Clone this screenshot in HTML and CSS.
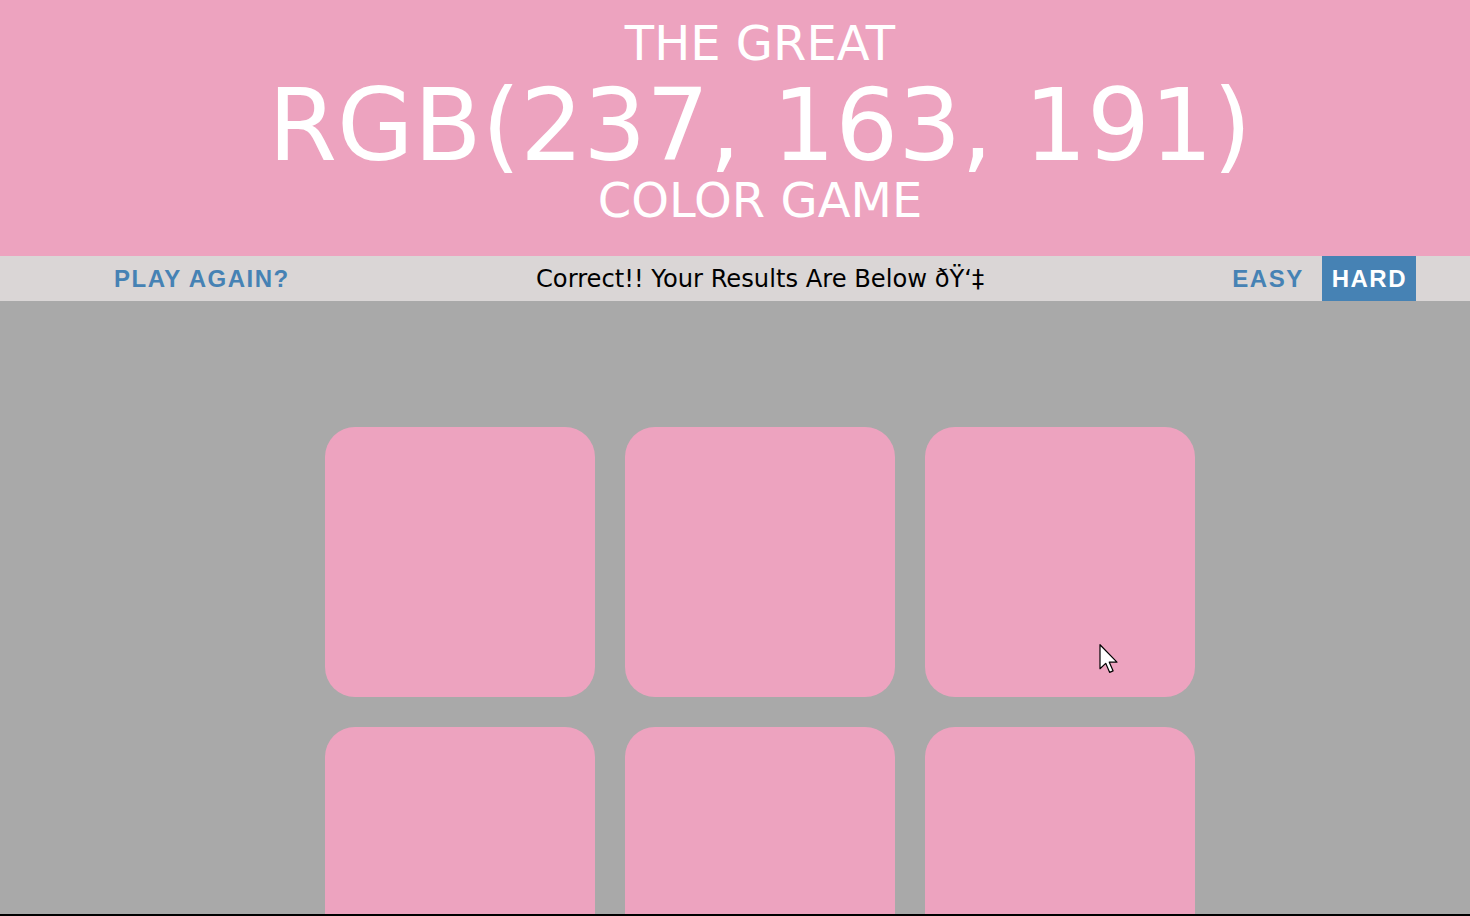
FILE: index.html
```html
<!DOCTYPE html>
<html lang="en">
<head>
<meta charset="utf-8">
<title>The Great RGB Color Game</title>
<link rel="stylesheet" href="styles.css">
</head>
<body>
<div class="page">
  <header class="hero">
    <h1 class="title">
      <span class="title-small">THE GREAT</span>
      <span class="title-rgb">RGB(237, 163, 191)</span>
      <span class="title-small">COLOR GAME</span>
    </h1>
  </header>
  <nav class="stripe">
    <div class="stripe-left">
      <button class="btn">PLAY AGAIN?</button>
    </div>
    <span class="message">Correct!! Your Results Are Below ðŸ‘‡</span>
    <div class="stripe-right">
      <button class="btn">EASY</button>
      <button class="btn btn-selected">HARD</button>
    </div>
  </nav>
  <main class="board">
    <div class="square"></div>
    <div class="square"></div>
    <div class="square"></div>
    <div class="square"></div>
    <div class="square"></div>
    <div class="square"></div>
  </main>
</div>
<svg class="cursor" width="20" height="30" viewBox="0 0 13 20" aria-hidden="true">
  <path d="M0.5 0.5 L0.5 16.5 L4.3 12.9 L6.9 18.9 L9.2 17.9 L6.7 12.1 L11.8 12.1 Z" fill="#fff" stroke="#000" stroke-width="0.8" stroke-linejoin="round"/>
</svg>
<div class="edge"></div>
</body>
</html>
```

FILE: styles.css
```css
html, body {
  margin: 0;
  padding: 0;
  overflow: hidden;
}

body {
  background: #a9a9a9;
  font-family: "DejaVu Sans", Verdana, sans-serif;
}

.page {
  width: 1520px;
  height: 916px;
  overflow: hidden;
  background: #a9a9a9;
}

.hero {
  background: #eda3bf;
  padding: 19px 0 32px;
  text-align: center;
  color: #ffffff;
}

.title {
  margin: 0;
  font-weight: normal;
  font-family: "DejaVu Sans", Verdana, sans-serif;
}

.title-small {
  display: block;
  font-size: 48px;
  line-height: 48px;
}

.title-small:first-child {
  margin-bottom: 9px;
}

.title-rgb {
  display: block;
  font-size: 99px;
  line-height: 100px;
}

.stripe {
  height: 45px;
  background: #dad6d6;
  display: grid;
  grid-template-columns: 1fr auto 1fr;
  align-items: stretch;
  padding: 0 104px;
}

.stripe-left {
  display: flex;
  justify-content: flex-start;
}

.stripe-right {
  display: flex;
  justify-content: flex-end;
  gap: 9px;
}

.message {
  align-self: center;
  font-size: 24.2px;
  color: #000000;
  font-family: "DejaVu Sans", Verdana, sans-serif;
}

.btn {
  border: none;
  margin: 0;
  background: transparent;
  color: #4682b4;
  font-family: "Liberation Sans", Arial, sans-serif;
  font-weight: bold;
  font-size: 24px;
  letter-spacing: 1.5px;
  padding: 0 9px 0 10px;
  height: 45px;
  line-height: 45px;
  cursor: pointer;
}

.btn-selected {
  background: #4682b4;
  color: #ffffff;
}

.board {
  width: 870px;
  margin: 126px auto 0;
  display: grid;
  grid-template-columns: repeat(3, 270px);
  gap: 30px;
}

.square {
  width: 270px;
  height: 270px;
  border-radius: 30px;
  background: #eda3bf;
}

.cursor {
  position: fixed;
  left: 1099px;
  top: 644px;
}

.edge {
  position: fixed;
  left: 0;
  right: 0;
  bottom: 0;
  height: 2px;
  background: #000000;
}
```
